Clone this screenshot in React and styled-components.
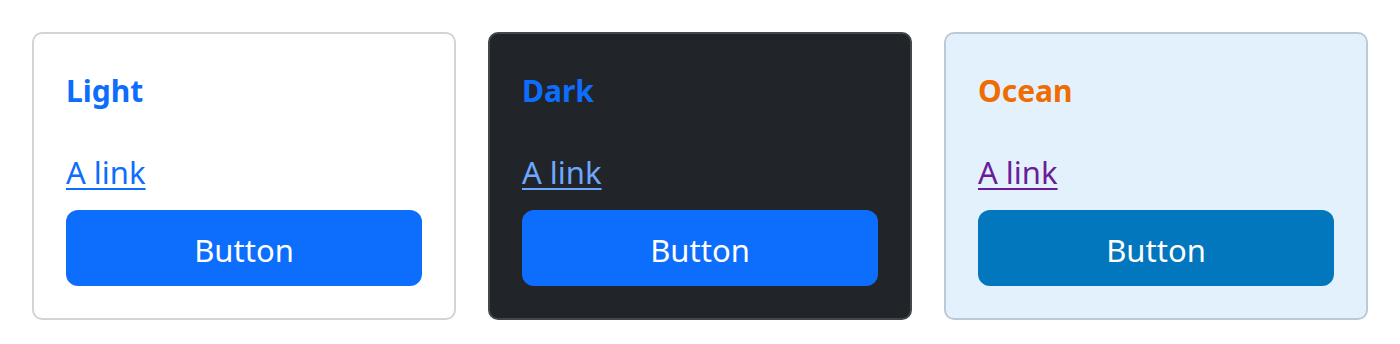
import styled, { createGlobalStyle } from "styled-components";

const GlobalStyle = createGlobalStyle`
  html, body {
    margin: 0;
    background: #fff;
  }
  body {
    font-family: "Segoe UI", "Noto Sans", "Liberation Sans", sans-serif;
  }
`;

const themes = {
  light: {
    bg: "#ffffff",
    border: "#d4d4d4",
    title: "#0d6efd",
    link: "#0d6efd",
    btn: "#0d6efd",
  },
  dark: {
    bg: "#212529",
    border: "#43474c",
    title: "#0d6efd",
    link: "#6ea8fe",
    btn: "#0d6efd",
  },
  ocean: {
    bg: "#e3f1fc",
    border: "#bccad8",
    title: "#ef6c00",
    link: "#6a1b9a",
    btn: "#0277bd",
  },
};

const Grid = styled.div`
  display: grid;
  grid-template-columns: repeat(3, 1fr);
  gap: 32px;
  padding: 32px;
`;

const Card = styled.div`
  display: flex;
  flex-direction: column;
  height: 288px;
  box-sizing: border-box;
  padding: 32px;
  border: 2px solid ${({ $t }) => $t.border};
  border-radius: 10px;
  background: ${({ $t }) => $t.bg};
`;

const Title = styled.h3`
  margin: 6px 0 38px;
  font-size: 30px;
  font-weight: 700;
  line-height: 38px;
  color: ${({ $t }) => $t.title};
`;

const Link = styled.a`
  display: block;
  width: fit-content;
  margin-bottom: 14px;
  font-size: 31px;
  line-height: 48px;
  color: ${({ $t }) => $t.link};
  text-decoration: underline;
  text-underline-offset: 4px;
  text-decoration-thickness: 2px;
`;

const Button = styled.button`
  width: 100%;
  height: 76px;
  padding: 4px 0 0;
  border: none;
  border-radius: 12px;
  background: ${({ $t }) => $t.btn};
  color: #fff;
  font-family: inherit;
  font-size: 31px;
  line-height: 48px;
`;

const cards = [
  { name: "Light", t: themes.light },
  { name: "Dark", t: themes.dark },
  { name: "Ocean", t: themes.ocean },
];

export default function App() {
  return (
    <>
      <GlobalStyle />
      <Grid>
        {cards.map((c) => (
          <Card key={c.name} $t={c.t}>
            <Title $t={c.t}>{c.name}</Title>
            <Link $t={c.t} href="#">
              A link
            </Link>
            <Button $t={c.t}>Button</Button>
          </Card>
        ))}
      </Grid>
    </>
  );
}
